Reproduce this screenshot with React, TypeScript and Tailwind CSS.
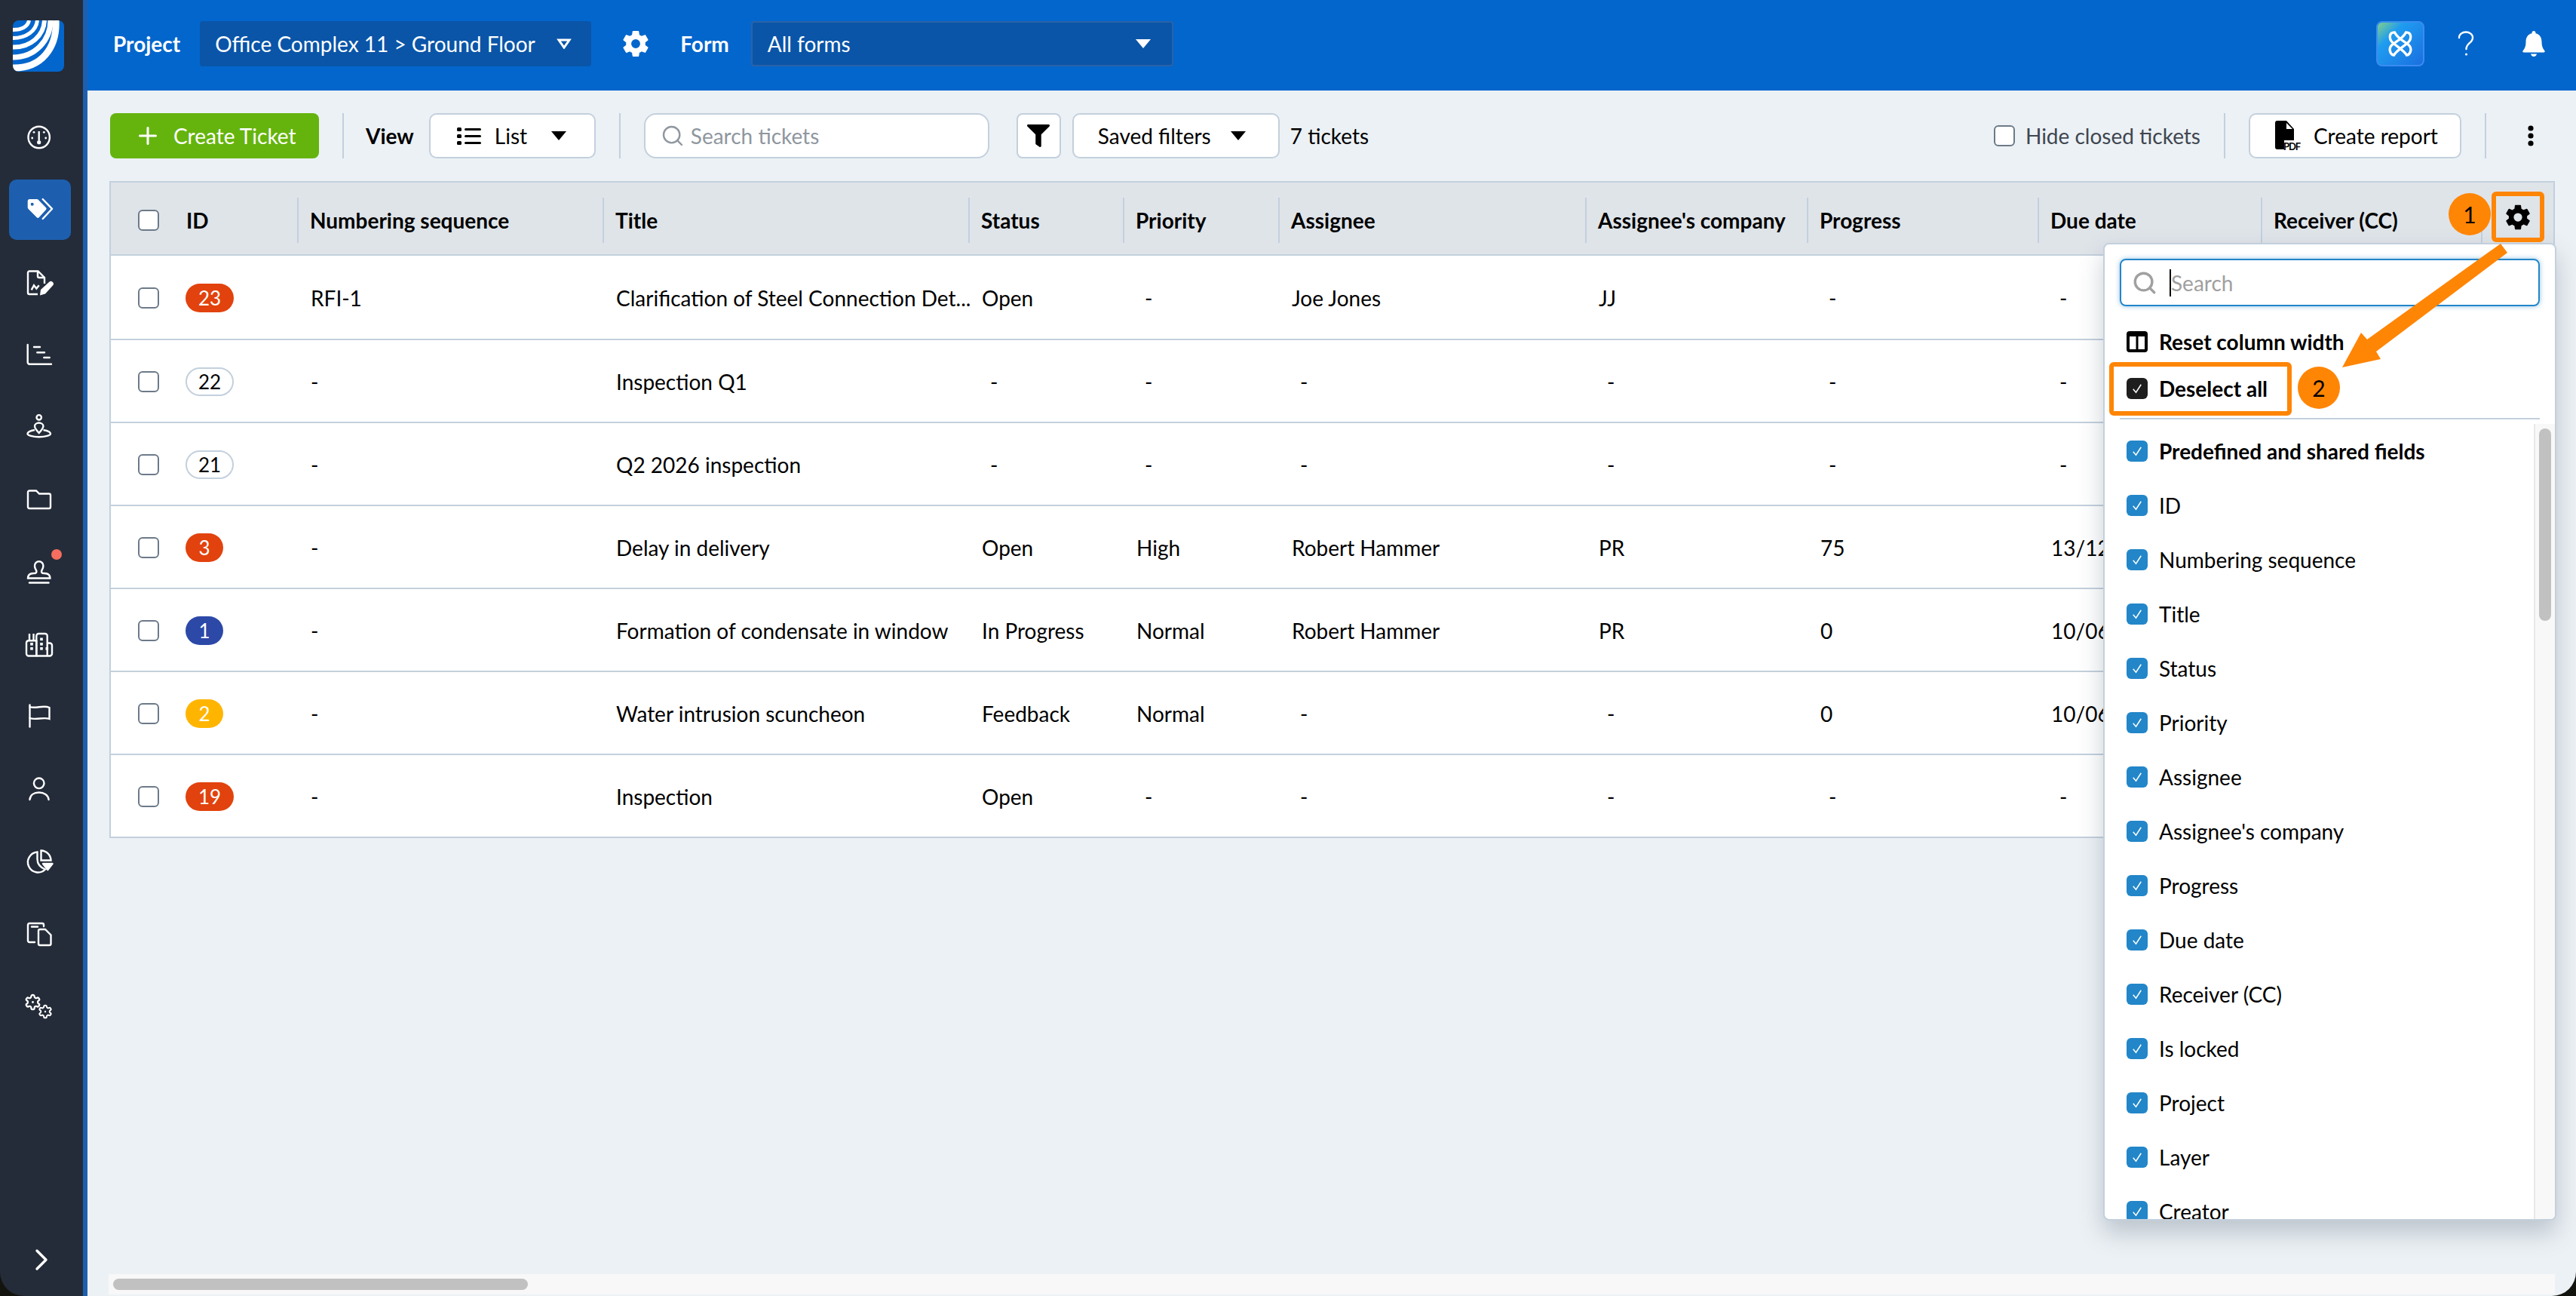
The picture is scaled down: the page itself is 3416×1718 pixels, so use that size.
import { ChevronRight, Plus, Search } from "lucide-react";
import type { ReactNode } from "react";
import { FaFilter } from "react-icons/fa";
import { IoSettingsSharp } from "react-icons/io5";

type Row = {
  id: string;
  tone: string;
  wide: boolean;
  seq: string;
  title: string;
  status: string;
  priority: string;
  assignee: string;
  company: string;
  progress: string;
  due: string;
};

const columns = "grid grid-cols-[249px_405px_485px_205px_206px_407px_294px_306px_296px_292px_1fr]";

const rows: Row[] = [
  { id: "23", tone: "bg-[#e2420d] text-white", wide: true, seq: "RFI-1", title: "Clarification of Steel Connection Det...", status: "Open", priority: "-", assignee: "Joe Jones", company: "JJ", progress: "-", due: "-" },
  { id: "22", tone: "bg-white text-black border-2 border-[#c3d0dd]", wide: true, seq: "-", title: "Inspection Q1", status: "-", priority: "-", assignee: "-", company: "-", progress: "-", due: "-" },
  { id: "21", tone: "bg-white text-black border-2 border-[#c3d0dd]", wide: true, seq: "-", title: "Q2 2026 inspection", status: "-", priority: "-", assignee: "-", company: "-", progress: "-", due: "-" },
  { id: "3", tone: "bg-[#e2420d] text-white", wide: false, seq: "-", title: "Delay in delivery", status: "Open", priority: "High", assignee: "Robert Hammer", company: "PR", progress: "75", due: "13/12/2025" },
  { id: "1", tone: "bg-[#2c49a7] text-white", wide: false, seq: "-", title: "Formation of condensate in window", status: "In Progress", priority: "Normal", assignee: "Robert Hammer", company: "PR", progress: "0", due: "10/06/2025" },
  { id: "2", tone: "bg-[#ffb500] text-white", wide: false, seq: "-", title: "Water intrusion scuncheon", status: "Feedback", priority: "Normal", assignee: "-", company: "-", progress: "0", due: "10/06/2025" },
  { id: "19", tone: "bg-[#e2420d] text-white", wide: true, seq: "-", title: "Inspection", status: "Open", priority: "-", assignee: "-", company: "-", progress: "-", due: "-" },
];

const heads = ["Numbering sequence", "Title", "Status", "Priority", "Assignee", "Assignee's company", "Progress", "Due date", "Receiver (CC)"];

const fields = ["ID", "Numbering sequence", "Title", "Status", "Priority", "Assignee", "Assignee's company", "Progress", "Due date", "Receiver (CC)", "Is locked", "Project", "Layer", "Creator"];

const cog =
  "M12.22 2h-.44a2 2 0 0 0-2 2v.18a2 2 0 0 1-1 1.73l-.43.25a2 2 0 0 1-2 0l-.15-.08a2 2 0 0 0-2.73.73l-.22.38a2 2 0 0 0 .73 2.73l.15.1a2 2 0 0 1 1 1.72v.51a2 2 0 0 1-1 1.74l-.15.09a2 2 0 0 0-.73 2.73l.22.38a2 2 0 0 0 2.73.73l.15-.08a2 2 0 0 1 2 0l.43.25a2 2 0 0 1 1 1.73V20a2 2 0 0 0 2 2h.44a2 2 0 0 0 2-2v-.18a2 2 0 0 1 1-1.73l.43-.25a2 2 0 0 1 2 0l.15.08a2 2 0 0 0 2.73-.73l.22-.39a2 2 0 0 0-.73-2.73l-.15-.08a2 2 0 0 1-1-1.74v-.5a2 2 0 0 1 1-1.74l.15-.09a2 2 0 0 0 .73-2.73l-.22-.38a2 2 0 0 0-2.73-.73l-.15.08a2 2 0 0 1-2 0l-.43-.25a2 2 0 0 1-1-1.73V4a2 2 0 0 0-2-2z";

function Check({ tone = "bg-[#2286c9]" }: { tone?: string }) {
  return (
    <span className={`flex h-[28px] w-[28px] shrink-0 items-center justify-center rounded-[6px] ${tone}`}>
      <svg viewBox="0 0 24 24" className="h-[18px] w-[18px]" fill="none" stroke="white" strokeWidth="2">
        <path d="M5 13l5 6L19 5" />
      </svg>
    </span>
  );
}

function Box({ tone = "border-[#6c7a89]" }: { tone?: string }) {
  return <span className={`block h-[28px] w-[28px] shrink-0 rounded-[6px] border-2 bg-white ${tone}`} />;
}

function Divider({ className = "mx-[31px]" }: { className?: string }) {
  return <div className={`h-[60px] w-[2px] shrink-0 bg-[#c3d0dd] ${className}`} />;
}

function Caret({ className = "border-t-black" }: { className?: string }) {
  return <span className={`block h-0 w-0 border-x-[10px] border-t-[12px] border-x-transparent ${className}`} />;
}

function Logo() {
  return (
    <svg viewBox="0 0 68 68" className="h-[68px] w-[68px] rounded-[8px]">
      <rect width="68" height="68" fill="#0366cc" />
      <g fill="none" stroke="white">
        <path strokeWidth="5" d="M0 12.5C12 12.5 20 8 21.5 0" />
        <path strokeWidth="5" d="M0 23.5C18 23.5 31 14 32.5 0" />
        <path strokeWidth="6" d="M0 35.5C24 36 41 20 42 0" />
        <path strokeWidth="7" d="M0 49C30 49 50 26 50 0" />
        <path strokeWidth="9" d="M0 63C38 64 59 36 57 0" />
      </g>
    </svg>
  );
}

const navIcons: ReactNode[] = [
  <g key="dash">
    <circle cx="17.7" cy="18" r="14.2" />
    <path d="M17.7 10v12" />
    <circle cx="17.7" cy="24.7" r="2.6" fill="white" stroke="none" />
    <g fill="white" stroke="none">
      <circle cx="8.7" cy="19" r="1.4" />
      <circle cx="11" cy="11.3" r="1.4" />
      <circle cx="24.3" cy="11.3" r="1.4" />
      <circle cx="26.7" cy="19" r="1.4" />
    </g>
  </g>,
  <g key="tag">
    <path
      d="M6 4h9a2 2 0 0 1 1.5.6l10.5 10.6a2 2 0 0 1 0 2.8l-9.3 10.2a2 2 0 0 1-2.9 0L3.6 17a3 3 0 0 1-.9-2V7a3 3 0 0 1 3.3-3z"
      fill="white"
      stroke="none"
    />
    <circle cx="8.7" cy="10.7" r="2" fill="#1d5fae" stroke="none" />
    <path d="M22.7 4l12.4 12.8L22.7 30" strokeLinecap="round" strokeLinejoin="round" />
  </g>,
  <g key="form">
    <path d="M25 20v-8l-8.5-8.5H5a2 2 0 0 0-2 2V32a2 2 0 0 0 2 2h11" />
    <path d="M16 3.5V10a2 2 0 0 0 2 2h7" />
    <path d="M7.7 28.3l3.3-6 3.3 4.3 3.4-4.3" />
    <path d="M19 35.5l1-7.5 11-10a3.2 3.2 0 0 1 5 4.5L26 33.5z" fill="white" stroke="none" />
  </g>,
  <g key="chart" strokeLinecap="round">
    <path d="M2.7 5v23a2.5 2.5 0 0 0 2.5 2.7H34" />
    <path d="M11 8h8M15.3 15.3H25M24.3 22h7.4" />
  </g>,
  <g key="pin">
    <circle cx="17.7" cy="5.3" r="3.2" />
    <path d="M17.7 26C14 22 12 19.5 12 17a5.7 4.5 0 0 1 11.4 0c0 2.5-2 5-5.7 9z" />
    <path d="M12 22c-6 1-9.5 3-9.5 5 0 2.2 7 4.2 15.2 4.2S33 29.2 33 27c0-2-3.5-4-9.5-5" />
  </g>,
  <g key="folder">
    <path d="M5 6.5h9l4 4h13a2 2 0 0 1 2 2V28a2 2 0 0 1-2 2H5a2 2 0 0 1-2-2V8.5a2 2 0 0 1 2-2z" />
  </g>,
  <g key="stamp" strokeLinecap="round">
    <path d="M3 26.5C3 21.5 7 20 11 20c3 0 4-1.5 3-4-1-2-2-3-2-6a5.7 5.7 0 0 1 11.4 0c0 3-1 4-2 6-1 2.5 0 4 3 4 4 0 8 1.5 8 6.5z" />
    <path d="M5 32.5h25.5" />
  </g>,
  <g key="buildings" strokeLinejoin="round">
    <path d="M14.3 33.5H4a3 3 0 0 1-3-3V16a3 3 0 0 1 3-2.8h10.3z" />
    <path d="M14.3 33.5V7a3 3 0 0 1 3-3h8.4a3 3 0 0 1 3 3v26.5" />
    <path d="M28.7 16.5H32a3 3 0 0 1 3 3v11a3 3 0 0 1-3 3H14.3" />
    <path d="M5 13V4M10.5 13V4" />
    <g fill="white" stroke="none">
      <rect x="6.2" y="16" width="3.6" height="3.6" />
      <rect x="6.2" y="22" width="3.6" height="3.6" />
      <rect x="19.2" y="9.5" width="3.6" height="3.6" />
      <rect x="19.2" y="16" width="3.6" height="3.6" />
      <rect x="19.2" y="22" width="3.6" height="3.6" />
      <rect x="26.5" y="22" width="3.6" height="3.6" />
    </g>
  </g>,
  <g key="flag" strokeLinecap="round">
    <path d="M5.5 2.5v29" />
    <path d="M5.5 5c8 3 18-3 26 1v15c-8-3-18 2-26-1" />
  </g>,
  <g key="user" strokeLinecap="round">
    <circle cx="17.7" cy="10.3" r="6.8" />
    <path d="M5.5 32C6 26 11 22.5 17.7 22.5S30 26 30.5 32" />
  </g>,
  <g key="pie">
    <path d="M15.5 5.5A13.5 13.5 0 1 0 26 28.5C20 26 15.5 21 15.5 15z" />
    <path d="M20.5 3.5a13.5 13.5 0 0 1 13 13h-13z" />
    <path d="M23 21h12.5l-6.2 8z" fill="white" stroke="white" strokeLinejoin="round" />
  </g>,
  <g key="copy" strokeLinecap="round">
    <path d="M12 29H5a2 2 0 0 1-2-2V6a2 2 0 0 1 2-2h17a2 2 0 0 1 2 2v2" />
    <path d="M8 8.5h8" />
    <path d="M19 12h7l7.5 7.5V31a2 2 0 0 1-2 2H19a2 2 0 0 1-2-2V14a2 2 0 0 1 2-2z" />
  </g>,
  <g key="gears">
    <svg x="-2" y="1" width="23" height="23" viewBox="0 0 24 24" overflow="visible">
      <path d={cog} />
      <circle cx="12" cy="12" r="1.5" fill="white" stroke="none" />
    </svg>
    <svg x="16" y="15" width="20" height="20" viewBox="0 0 24 24" overflow="visible">
      <path d={cog} />
      <circle cx="12" cy="12" r="1.5" fill="white" stroke="none" />
    </svg>
  </g>,
];

function Sidebar() {
  return (
    <aside className="flex h-[1718px] w-[116px] shrink-0 flex-col border-r-[6px] border-[#1d5fae] bg-[#242c39] pt-[27px]">
      <div className="pl-[17px]">
        <Logo />
      </div>
      <div className="mt-[39px] flex flex-col">
        {navIcons.map((icon, i) => (
          <div key={i} className="relative flex h-[96px] items-center">
            <div className={i === 1 ? "ml-[12px] flex h-[80px] w-[82px] items-center rounded-[10px] bg-[#1d5fae] pl-[22px]" : "flex items-center pl-[34px]"}>
              <svg viewBox="0 0 36 36" className="h-[36px] w-[36px] overflow-visible" fill="none" stroke="white" strokeWidth="2.4">
                {icon}
              </svg>
            </div>
            {i === 6 && <span className="absolute left-[68px] top-[18px] h-[14px] w-[14px] rounded-full bg-[#f56e5f]" />}
          </div>
        ))}
      </div>
      <div className="mt-auto pb-[24px] pl-[31px] text-white">
        <ChevronRight className="h-[48px] w-[48px]" strokeWidth={1.7} />
      </div>
    </aside>
  );
}

export default function App() {
  return (
    <div className="h-[1718px] w-[3416px] bg-[#14140f]">
      <div className="flex h-[1718px] w-[3416px] overflow-hidden rounded-b-[32px] font-['Lato','Liberation_Sans',sans-serif] text-[28px] text-black">
        <Sidebar />
        <main className="flex min-w-0 flex-1 flex-col bg-[#ecf1f5]">
          <Header />
          <Toolbar />
          <Table />
        </main>
      </div>
    </div>
  );
}

function Header() {
  return (
    <header className="flex h-[120px] shrink-0 items-center bg-[#0366cc] pb-[4px] pl-[34px] pr-[41px] text-white">
      <span className="font-bold">Project</span>
      <div className="ml-[26px] flex h-[60px] w-[519px] items-center justify-between rounded-[4px] bg-[#0a55a8] pl-[20px] pr-[26px]">
        <span>Office Complex 11 &gt; Ground Floor</span>
        <svg viewBox="0 0 20 14" className="h-[14px] w-[20px]" fill="none" stroke="white" strokeWidth="3">
          <path d="M3 2h14l-7 10z" />
        </svg>
      </div>
      <IoSettingsSharp className="ml-[40px] h-[38px] w-[38px]" />
      <span className="ml-[40px] font-bold">Form</span>
      <div className="ml-[29px] flex h-[60px] w-[560px] items-center justify-between rounded-[4px] border-2 border-[#2a62a8] bg-[#0a55a8] pl-[20px] pr-[28px]">
        <span>All forms</span>
        <Caret className="border-t-white" />
      </div>
      <div className="ml-auto flex h-[60px] w-[64px] items-center justify-center rounded-[8px] border-2 border-[#3a8cf0] bg-[linear-gradient(135deg,#7fd08a_0%,#1f9cf0_30%,#1a6fe0_100%)]">
        <svg viewBox="0 0 40 40" className="h-[38px] w-[38px]" fill="none" stroke="white" strokeWidth="3.5">
          <path d="M12 4c-8 0-8 9-3 14 5 5 17 12 20 18 5-1 8-9 3-14-5-5-15-8-20-18z" />
          <path d="M28 4c8 0 8 9 3 14-5 5-17 12-20 18-5-1-8-9-3-14 5-5 15-8 20-18z" />
        </svg>
      </div>
      <svg viewBox="0 0 22 34" className="ml-[44px] h-[34px] w-[22px]" fill="none" stroke="white" strokeWidth="2.4" strokeLinecap="round">
        <path d="M2 9C2 4.5 6 1.5 11 1.5s9 3 9 7.500c0 7-8.500 7-8.500 15" />
        <circle cx="11.5" cy="31" r="1.6" fill="white" stroke="none" />
      </svg>
      <svg viewBox="0 0 30 34" className="ml-[64px] h-[34px] w-[30px]" fill="white">
        <path d="M15 0c1.5 0 2.5 1 2.5 2.5v.8C23 4.5 25.5 9 25.5 14.5c0 5 1 8 4 12 .6 1 0 2-1.200 2H1.700c-1.200 0-1.800-1-1.200-2 3-4 4-7 4-12C4.500 9 7 4.500 12.500 3.300v-.8C12.500 1 13.500 0 15 0z" />
        <path d="M11 30.5h8c-.5 2-2 3.500-4 3.500s-3.500-1.500-4-3.500z" />
      </svg>
    </header>
  );
}

function Toolbar() {
  return (
    <div className="flex h-[120px] shrink-0 items-center pl-[30px] pr-[30px]">
      <button className="flex h-[60px] w-[277px] items-center rounded-[8px] bg-[#65b40e] pl-[32px] text-white">
        <Plus className="h-[36px] w-[36px]" strokeWidth={2} />
        <span className="ml-[16px]">Create Ticket</span>
      </button>
      <Divider className="ml-[31px] mr-[29px]" />
      <span className="font-bold">View</span>
      <button className="ml-[20px] flex h-[60px] w-[221px] items-center rounded-[10px] border-2 border-[#c3d0dd] bg-white pl-[35px]">
        <svg viewBox="0 0 32 24" className="h-[24px] w-[32px]" fill="black">
          <rect x="0" y="1" width="6" height="5" rx="1.5" />
          <rect x="0" y="10" width="6" height="5" rx="1.5" />
          <rect x="0" y="19" width="6" height="5" rx="1.5" />
          <rect x="10" y="2" width="22" height="3" rx="1.5" />
          <rect x="10" y="11" width="22" height="3" rx="1.5" />
          <rect x="10" y="20" width="22" height="3" rx="1.5" />
        </svg>
        <span className="ml-[18px]">List</span>
        <Caret className="ml-[32px]" />
      </button>
      <Divider />
      <div className="flex h-[60px] w-[458px] items-center rounded-[16px] border-2 border-[#c3d0dd] bg-white pl-[20px] text-[#8f979f]">
        <Search className="h-[32px] w-[32px]" strokeWidth={1.8} />
        <span className="ml-[8px]">Search tickets</span>
      </div>
      <button className="ml-[36px] flex h-[60px] w-[59px] items-center justify-center rounded-[8px] border-2 border-[#c3d0dd] bg-white">
        <FaFilter className="h-[30px] w-[32px]" />
      </button>
      <button className="ml-[15px] flex h-[60px] w-[275px] items-center rounded-[10px] border-2 border-[#c3d0dd] bg-white pl-[32px]">
        <span>Saved filters</span>
        <Caret className="ml-[26px]" />
      </button>
      <span className="ml-[14px]">7 tickets</span>
      <div className="ml-auto flex items-center">
        <Box />
        <span className="ml-[14px] text-[#3f4650]">Hide closed tickets</span>
        <div className="ml-[31px] h-[60px] w-[2px] bg-[#c3d0dd]" />
        <button className="ml-[31px] flex h-[60px] w-[282px] items-center rounded-[10px] border-2 border-[#c3d0dd] bg-white pl-[33px]">
          <svg viewBox="0 0 34 40" className="h-[40px] w-[34px]">
            <path d="M3 0h12l10 11v15H12v12H3a3 3 0 0 1-3-3V3a3 3 0 0 1 3-3z" fill="black" />
            <path d="M15 3v8h8z" fill="white" />
            <text x="11" y="39" fontSize="13" fontWeight="700" fontFamily="Lato" textLength="23">PDF</text>
          </svg>
          <span className="ml-[17px]">Create report</span>
        </button>
        <div className="ml-[31px] h-[60px] w-[2px] bg-[#c3d0dd]" />
        <svg viewBox="0 0 8 28" className="ml-[55px] mr-[26px] h-[28px] w-[8px]" fill="black">
          <circle cx="4" cy="4" r="3.6" />
          <circle cx="4" cy="14" r="3.6" />
          <circle cx="4" cy="24" r="3.6" />
        </svg>
      </div>
    </div>
  );
}

function Table() {
  return (
    <div className="relative flex min-h-0 flex-1 flex-col">
      <div className="ml-[29px] mr-[28px] border-2 border-[#c3d0dd] bg-white">
        <div className={`${columns} h-[97px] items-center border-b-2 border-[#c3d0dd] bg-[#dfe4e9] pt-[4px] font-bold`}>
          <div className="flex h-[60px] items-center border-r-2 border-[#c3d0dd] pl-[36px]">
            <Box />
            <span className="ml-[36px]">ID</span>
          </div>
          {heads.map((h) => (
            <div key={h} className="flex h-[60px] items-center whitespace-nowrap border-r-2 border-[#c3d0dd] pl-[15px]">
              {h}
            </div>
          ))}
          <div />
        </div>
        {rows.map((r, i) => (
          <TableRow key={r.id} row={r} first={i === 0} last={i === rows.length - 1} />
        ))}
      </div>
      <ColumnsMenu />
      <Annotations />
      <div className="mb-[2px] ml-[28px] mr-[28px] mt-auto flex h-[27px] items-center bg-[#f8f8f8] pl-[6px]">
        <div className="h-[15px] w-[550px] rounded-full bg-[#c1c1c1]" />
      </div>
    </div>
  );
}

function TableRow({ row, first, last }: { row: Row; first: boolean; last: boolean }) {
  const cell = (value: string, keepLeft = false) => (
    <div className={`whitespace-nowrap ${value === "-" && !keepLeft ? "pl-[27px]" : "pl-[16px]"}`}>{value}</div>
  );
  return (
    <div className={`${columns} items-center pt-[2px] ${first ? "h-[112px]" : last ? "h-[108px]" : "h-[110px]"} ${last ? "" : "border-b-2 border-[#c3d0dd]"}`}>
      <div className="flex items-center pl-[36px]">
        <Box />
        <span
          className={`ml-[35px] flex h-[38px] items-center justify-center rounded-full text-[26px] ${row.wide ? "w-[64px]" : "w-[50px]"} ${row.tone}`}
        >
          {row.id}
        </span>
      </div>
      {cell(row.seq, true)}
      {cell(row.title)}
      {cell(row.status)}
      {cell(row.priority)}
      {cell(row.assignee)}
      {cell(row.company)}
      {cell(row.progress)}
      {cell(row.due)}
      <div />
      <div />
    </div>
  );
}

function ColumnsMenu() {
  return (
    <div className="absolute left-[2673px] top-[82px] z-10 flex h-[1296px] w-[601px] flex-col overflow-hidden rounded-[8px] border-2 border-[#c3d0dd] bg-white shadow-[0_16px_32px_rgba(60,80,100,0.28)]">
      <div className="mx-[20px] mt-[19px] flex h-[63px] shrink-0 items-center rounded-[8px] border-2 border-[#2286c9] pl-[14px] text-[#a0a0a0] shadow-[0_0_6px_rgba(34,134,201,0.5)]">
        <Search className="h-[34px] w-[34px]" strokeWidth={2.4} />
        <span className="ml-[16px] h-[36px] w-[2px] bg-black" />
        <span>Search</span>
      </div>
      <div className="mt-[17px] flex h-[60px] shrink-0 items-center pl-[29px] font-bold">
        <svg viewBox="0 0 28 28" className="h-[28px] w-[28px]">
          <rect x="0" y="0" width="28" height="28" rx="4" fill="black" />
          <rect x="4" y="7" width="8.5" height="17" fill="white" />
          <rect x="15.5" y="7" width="8.5" height="17" fill="white" />
        </svg>
        <span className="ml-[15px]">Reset column width</span>
      </div>
      <div className="flex h-[64px] shrink-0 items-center pl-[29px] font-bold">
        <Check tone="bg-[#1e1e1e]" />
        <span className="ml-[15px]">Deselect all</span>
      </div>
      <div className="mx-[20px] mt-[7px] h-[2px] shrink-0 bg-[#c3d0dd]" />
      <div className="mt-[6px] flex min-h-0 flex-1">
        <div className="min-w-0 flex-1 pl-[29px]">
          <div className="flex h-[72px] items-center font-bold">
            <Check />
            <span className="ml-[15px]">Predefined and shared fields</span>
          </div>
          {fields.map((f) => (
            <div key={f} className="flex h-[72px] items-center">
              <Check />
              <span className="ml-[15px]">{f}</span>
            </div>
          ))}
        </div>
        <div className="w-[28px] shrink-0 border-l-2 border-[#e8e8e8] bg-[#f8f8f8] pl-[5px] pt-[6px]">
          <div className="h-[255px] w-[16px] rounded-full bg-[#c1c1c1]" />
        </div>
      </div>
    </div>
  );
}

function Annotations() {
  return (
    <div className="pointer-events-none absolute left-0 top-0 z-20">
      <Badge n="1" className="left-[3131px] top-[16px]" />
      <Badge n="2" className="left-[2931px] top-[246px]" />
      <div className="absolute left-[3188px] top-[14px] flex h-[67px] w-[70px] items-center justify-center rounded-[6px] border-[6px] border-[#ff8505]">
        <IoSettingsSharp className="h-[36px] w-[36px] text-black" />
      </div>
      <div className="absolute left-[2681px] top-[240px] h-[71px] w-[242px] rounded-[6px] border-[6px] border-[#ff8505]" />
      <svg className="absolute left-[2950px] top-[50px] h-[300px] w-[300px]" viewBox="0 0 300 300" fill="#ff8505">
        <polygon points="250,33 259,45 85,176 91,186 40,197 65,151 73,160" />
      </svg>
    </div>
  );
}

function Badge({ n, className }: { n: string; className: string }) {
  return (
    <div className={`absolute flex h-[56px] w-[56px] items-center justify-center rounded-full bg-[#ff8505] text-[30px] ${className}`}>
      {n}
    </div>
  );
}
